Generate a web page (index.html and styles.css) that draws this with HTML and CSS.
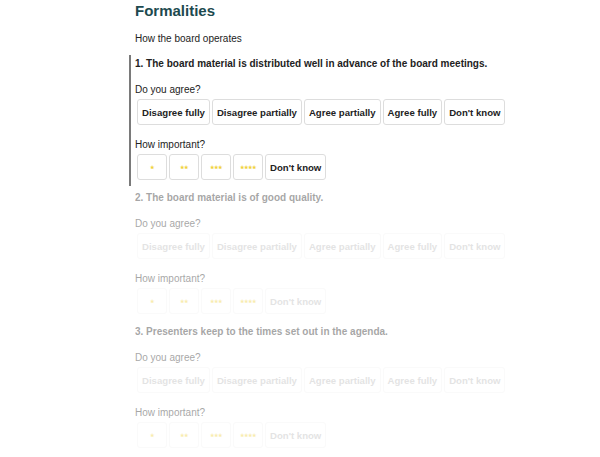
FILE: index.html
```html
<!DOCTYPE html>
<html lang="en">
<head>
    <meta charset="UTF-8">
    <meta name="viewport" content="width=device-width, initial-scale=1.0">
    <title>Formalities</title>
    <link rel="stylesheet" href="styles.css">
</head>
<body>
    <main class="page">
        <h1>Formalities</h1>
        <p class="intro">How the board operates</p>

        <section class="question active">
            <p class="q-title">1. The board material is distributed well in advance of the board meetings.</p>
            <p class="label">Do you agree?</p>
            <div class="options">
                <button class="opt">Disagree fully</button>
                <button class="opt">Disagree partially</button>
                <button class="opt">Agree partially</button>
                <button class="opt">Agree fully</button>
                <button class="opt">Don't know</button>
            </div>
            <p class="label">How important?</p>
            <div class="options">
                <button class="opt star">★</button>
                <button class="opt star">★★</button>
                <button class="opt star">★★★</button>
                <button class="opt star">★★★★</button>
                <button class="opt">Don't know</button>
            </div>
        </section>

        <section class="question">
            <p class="q-title">2. The board material is of good quality.</p>
            <p class="label">Do you agree?</p>
            <div class="options">
                <button class="opt">Disagree fully</button>
                <button class="opt">Disagree partially</button>
                <button class="opt">Agree partially</button>
                <button class="opt">Agree fully</button>
                <button class="opt">Don't know</button>
            </div>
            <p class="label">How important?</p>
            <div class="options">
                <button class="opt star">★</button>
                <button class="opt star">★★</button>
                <button class="opt star">★★★</button>
                <button class="opt star">★★★★</button>
                <button class="opt">Don't know</button>
            </div>
        </section>

        <section class="question">
            <p class="q-title">3. Presenters keep to the times set out in the agenda.</p>
            <p class="label">Do you agree?</p>
            <div class="options">
                <button class="opt">Disagree fully</button>
                <button class="opt">Disagree partially</button>
                <button class="opt">Agree partially</button>
                <button class="opt">Agree fully</button>
                <button class="opt">Don't know</button>
            </div>
            <p class="label">How important?</p>
            <div class="options">
                <button class="opt star">★</button>
                <button class="opt star">★★</button>
                <button class="opt star">★★★</button>
                <button class="opt star">★★★★</button>
                <button class="opt">Don't know</button>
            </div>
        </section>
    </main>
</body>
</html>
```

FILE: styles.css
```css
*{
    margin:0;
    padding:0;
    box-sizing: border-box;
}
body{
    background-color: #fff;
    font-family: "Liberation Sans", Arial, sans-serif;
    color: #222;
}
.page{
    padding-left: 135px;
}
h1{
    font-size: 15px;
    line-height: 22px;
    color: #1d4a4f;
}
.intro{
    margin-top: 10px;
    font-size: 10px;
    line-height: 14px;
}
.question{
    margin-top: 9px;
    margin-left: -6px;
    padding: 2px 0 6px 4px;
    border-left: 2px solid transparent;
    opacity: 0.4;
}
.question + .question{
    margin-top: 3px;
}
.question.active{
    border-left-color: #7a7a7a;
    opacity: 1;
}
.q-title{
    font-size: 10px;
    line-height: 14px;
    font-weight: bold;
}
.label{
    margin-top: 12px;
    font-size: 10px;
    line-height: 14px;
}
.options{
    display: flex;
    gap: 2px;
    margin-top: 2px;
    margin-left: 2px;
}
.options + .label{
    margin-top: 13px;
}
.opt{
    height: 26px;
    padding: 0 4px;
    border: 1px solid #ddd;
    border-radius: 3px;
    background-color: #fff;
    font-family: inherit;
    font-size: 9.6px;
    font-weight: bold;
    color: #222;
}
.question:not(.active) .opt{
    color: #bbb;
    border-color: #f4f4f4;
}
.star,
.question:not(.active) .star{
    width: 30px;
    font-size: 5px;
    color: #f0d23c;
}
```
